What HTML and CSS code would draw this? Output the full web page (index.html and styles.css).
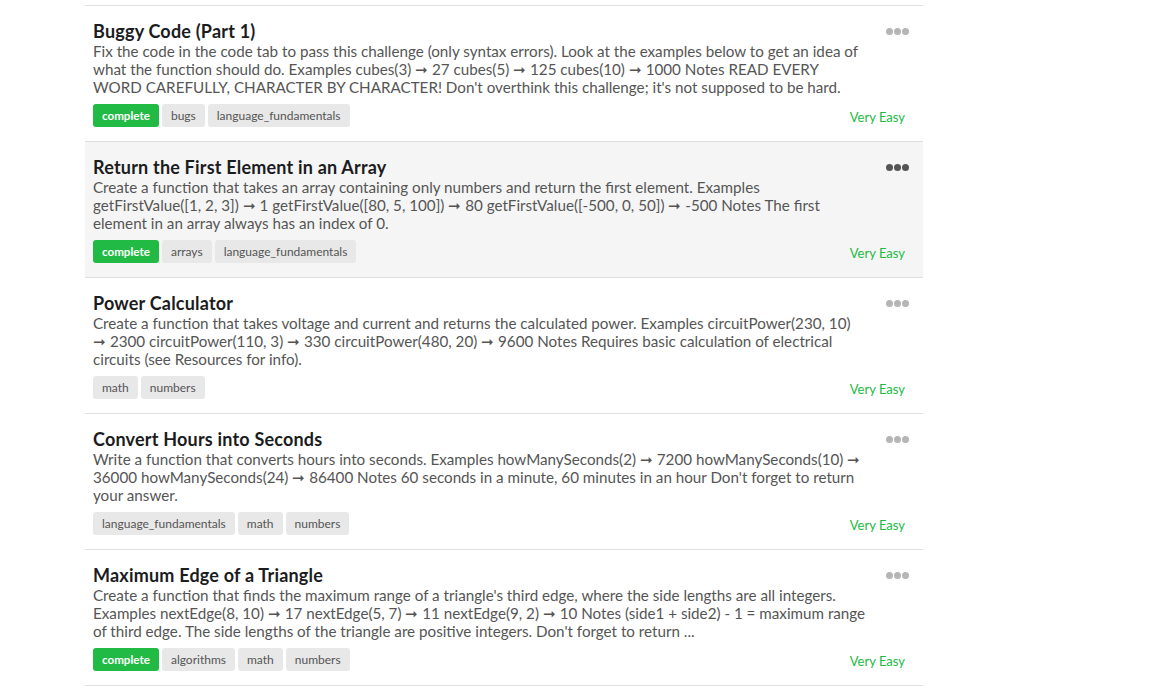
FILE: index.html
```html
<!DOCTYPE html>
<html>
<head>
<meta charset="utf-8">
<link rel="stylesheet" href="styles.css">
</head>
<body>
<div class="list">
  <div class="item">
    <div class="main">
      <div class="title">Buggy Code (Part 1)</div>
      <div class="desc">Fix the code in the code tab to pass this challenge (only syntax errors). Look at the examples below to get an idea of what the function should do. Examples cubes(3) ➞ 27 cubes(5) ➞ 125 cubes(10) ➞ 1000 Notes READ EVERY WORD CAREFULLY, CHARACTER BY CHARACTER! Don't overthink this challenge; it's not supposed to be hard.</div>
      <div class="tags"><span class="tag done">complete</span><span class="tag">bugs</span><span class="tag">language_fundamentals</span></div>
    </div>
    <div class="side"><span class="dots"><i></i><i></i><i></i></span><span class="level">Very Easy</span></div>
  </div>
  <div class="item hover">
    <div class="main">
      <div class="title">Return the First Element in an Array</div>
      <div class="desc">Create a function that takes an array containing only numbers and return the first element. Examples getFirstValue([1, 2, 3]) ➞ 1 getFirstValue([80, 5, 100]) ➞ 80 getFirstValue([-500, 0, 50]) ➞ -500 Notes The first element in an array always has an index of 0.</div>
      <div class="tags"><span class="tag done">complete</span><span class="tag">arrays</span><span class="tag">language_fundamentals</span></div>
    </div>
    <div class="side"><span class="dots"><i></i><i></i><i></i></span><span class="level">Very Easy</span></div>
  </div>
  <div class="item">
    <div class="main">
      <div class="title">Power Calculator</div>
      <div class="desc">Create a function that takes voltage and current and returns the calculated power. Examples circuitPower(230, 10) ➞ 2300 circuitPower(110, 3) ➞ 330 circuitPower(480, 20) ➞ 9600 Notes Requires basic calculation of electrical circuits (see Resources for info).</div>
      <div class="tags"><span class="tag">math</span><span class="tag">numbers</span></div>
    </div>
    <div class="side"><span class="dots"><i></i><i></i><i></i></span><span class="level">Very Easy</span></div>
  </div>
  <div class="item">
    <div class="main">
      <div class="title">Convert Hours into Seconds</div>
      <div class="desc">Write a function that converts hours into seconds. Examples howManySeconds(2) ➞ 7200 howManySeconds(10) ➞ 36000 howManySeconds(24) ➞ 86400 Notes 60 seconds in a minute, 60 minutes in an hour Don't forget to return your answer.</div>
      <div class="tags"><span class="tag">language_fundamentals</span><span class="tag">math</span><span class="tag">numbers</span></div>
    </div>
    <div class="side"><span class="dots"><i></i><i></i><i></i></span><span class="level">Very Easy</span></div>
  </div>
  <div class="item">
    <div class="main">
      <div class="title">Maximum Edge of a Triangle</div>
      <div class="desc">Create a function that finds the maximum range of a triangle's third edge, where the side lengths are all integers. Examples nextEdge(8, 10) ➞ 17 nextEdge(5, 7) ➞ 11 nextEdge(9, 2) ➞ 10 Notes (side1 + side2) - 1 = maximum range of third edge. The side lengths of the triangle are positive integers. Don't forget to return ...</div>
      <div class="tags"><span class="tag done">complete</span><span class="tag">algorithms</span><span class="tag">math</span><span class="tag">numbers</span></div>
    </div>
    <div class="side"><span class="dots"><i></i><i></i><i></i></span><span class="level">Very Easy</span></div>
  </div>
</div>
</body>
</html>
```
FILE: styles.css
```css
html, body { margin: 0; padding: 0; background: #fff; }
body { font-family: Lato, "Open Sans", sans-serif; color: #222; }
.list {
  width: 838px;
  margin: 5px 0 0 85px;
  border-top: 1px solid #dedede;
}
.item {
  display: flex;
  border-bottom: 1px solid #dedede;
  padding: 14px 14px 13px 8px;
  height: 108px;
}
.item.hover { background: #f5f5f5; }
.main { flex: 1; min-width: 0; }
.title {
  font-size: 18px;
  line-height: 22px;
  font-weight: 700;
  letter-spacing: 0.2px;
  color: #1b1c1d;
}
.desc {
  font-size: 15.2px;
  line-height: 18px;
  color: #555;
  width: 773px;
  height: 54px;
  overflow: hidden;
}
.tags { display: flex; gap: 3px; margin-top: 8px; }
.tag {
  font-size: 12px;
  line-height: 23px;
  height: 23px;
  padding: 0 9px;
  border-radius: 3px;
  background: #e8e8e8;
  color: #555;
  font-weight: 400;
}
.tag.done { background: #21ba45; color: #fff; font-weight: 700; font-size: 11.6px; }
.side {
  width: 32px;
  display: flex;
  flex-direction: column;
  align-items: flex-end;
  justify-content: space-between;
}
.dots { display: flex; gap: 1px; margin-top: 8px; }
.dots i { width: 7px; height: 7px; border-radius: 50%; background: #b5b5b5; display: block; }
.hover .dots i { background: #555; }
.level {
  font-size: 13px;
  color: #21ba45;
  white-space: nowrap;
  margin-bottom: 3px;
  margin-right: 4px;
}
```
